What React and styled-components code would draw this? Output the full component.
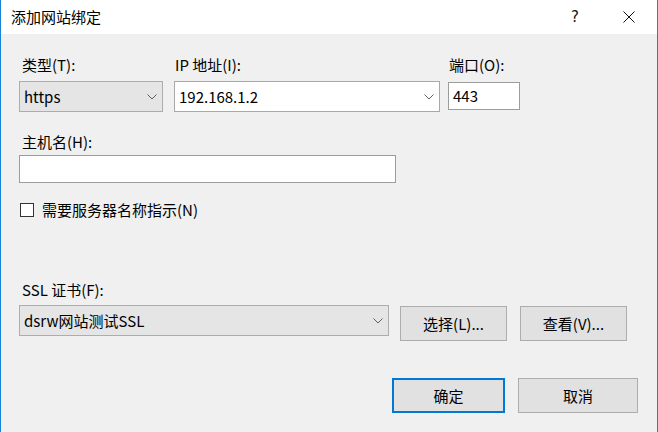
import React from "react";
import styled, { createGlobalStyle } from "styled-components";

const GlobalStyle = createGlobalStyle`
  html, body {
    margin: 0;
    padding: 0;
    background: #f0f0f0;
  }
  * {
    box-sizing: border-box;
  }
`;

const FONT = `"Microsoft YaHei UI", "Noto Sans CJK SC", "Noto Sans", sans-serif`;

const Chevron = () => (
  <svg width="10" height="6" viewBox="0 0 10 6">
    <polyline points="0.5,0.5 5,5 9.5,0.5" fill="none" stroke="#606060" strokeWidth="1" />
  </svg>
);

const CloseIcon = () => (
  <svg width="12" height="12" viewBox="0 0 12 12">
    <path d="M0.5 0.5 L11.5 11.5 M11.5 0.5 L0.5 11.5" stroke="#111" strokeWidth="1" />
  </svg>
);

const App = () => (
  <React.Fragment>
    <GlobalStyle />
    <Window>
      <TitleBar>
        <Title>添加网站绑定</Title>
        <TitleControls>
          <TitleButton>?</TitleButton>
          <TitleButton $close>
            <CloseIcon />
          </TitleButton>
        </TitleControls>
      </TitleBar>

      <Body>
        <Row>
          <Field $width={144} $gap={11}>
            <Label $indent={3}>类型(T):</Label>
            <Combo>
              <span>https</span>
              <Chevron />
            </Combo>
          </Field>
          <Field $width={266} $gap={8}>
            <Label $indent={1}>IP 地址(I):</Label>
            <Combo $white>
              <span>192.168.1.2</span>
              <Chevron />
            </Combo>
          </Field>
          <Field $width={72}>
            <Label $indent={1}>端口(O):</Label>
            <TextBox $top={1}>443</TextBox>
          </Field>
        </Row>

        <Section $top={20}>
          <Label $indent={3} $bottom={3}>主机名(H):</Label>
          <TextBox $width={377} />
        </Section>

        <CheckRow>
          <CheckBox />
          <span>需要服务器名称指示(N)</span>
        </CheckRow>

        <Section $top={60}>
          <Label $indent={3} $bottom={5}>SSL 证书(F):</Label>
          <Row>
            <Field $width={370} $gap={11}>
              <Combo>
                <span>dsrw网站测试SSL</span>
                <Chevron />
              </Combo>
            </Field>
            <Button $width={107} $top={1}>选择(L)...</Button>
            <Button $width={107} $top={1} $left={13}>查看(V)...</Button>
          </Row>
        </Section>

        <Footer>
          <Button $width={113} $height={35} $primary>确定</Button>
          <Button $width={120} $height={35} $left={13}>取消</Button>
        </Footer>
      </Body>
    </Window>
  </React.Fragment>
);

export default App;

const Window = styled.div`
  width: 658px;
  height: 432px;
  display: flex;
  flex-direction: column;
  border-left: 1px solid #1883d7;
  border-right: 1px solid #1883d7;
  font-family: ${FONT};
  font-size: 15px;
  line-height: 20px;
  color: #000;
  overflow: hidden;
`;

const TitleBar = styled.div`
  height: 34px;
  flex-shrink: 0;
  display: flex;
  align-items: center;
  background: #fff;
  padding-left: 10px;
`;

const Title = styled.div`
  font-size: 15px;
`;

const TitleControls = styled.div`
  margin-left: auto;
  display: flex;
  align-items: center;
  padding-right: 5px;
`;

const TitleButton = styled.div`
  width: 46px;
  height: 34px;
  display: flex;
  align-items: center;
  justify-content: center;
  margin-left: ${props => (props.$close ? "8px" : "0")};
  font-family: "DejaVu Sans", sans-serif;
  font-size: 15px;
  color: #111;
`;

const Body = styled.div`
  flex: 1;
  background: #f0f0f0;
  padding: 21px 0 0 18px;
  display: flex;
  flex-direction: column;
`;

const Row = styled.div`
  display: flex;
  align-items: flex-start;
`;

const Section = styled.div`
  margin-top: ${props => props.$top}px;
  display: flex;
  flex-direction: column;
`;

const Field = styled.div`
  width: ${props => props.$width}px;
  margin-right: ${props => props.$gap || 0}px;
  display: flex;
  flex-direction: column;
`;

const Label = styled.div`
  height: 20px;
  padding-left: ${props => props.$indent || 0}px;
  margin-bottom: ${props => (props.$bottom !== undefined ? props.$bottom : 6)}px;
  white-space: nowrap;
`;

const Combo = styled.div`
  height: 31px;
  display: flex;
  align-items: center;
  justify-content: space-between;
  padding: 0 5px 0 4px;
  border: 1px solid ${props => (props.$white ? "#a8a8a8" : "#adadad")};
  background: ${props => (props.$white ? "#fff" : "#e5e5e5")};
  white-space: nowrap;
`;

const TextBox = styled.div`
  width: ${props => (props.$width ? `${props.$width}px` : "auto")};
  height: 28px;
  margin-top: ${props => props.$top || 0}px;
  display: flex;
  align-items: center;
  padding-left: 4px;
  border: 1px solid #9c9c9c;
  background: #fff;
`;

const CheckRow = styled.div`
  margin-top: 17px;
  height: 20px;
  display: flex;
  align-items: center;
  gap: 8px;
  padding-left: 1px;
`;

const CheckBox = styled.div`
  width: 14px;
  height: 14px;
  border: 1px solid #333;
  background: #fff;
`;

const Button = styled.div`
  width: ${props => props.$width}px;
  height: ${props => props.$height || 35}px;
  margin-top: ${props => props.$top || 0}px;
  margin-left: ${props => props.$left || 0}px;
  display: flex;
  align-items: center;
  justify-content: center;
  background: #e1e1e1;
  border: ${props => (props.$primary ? "2px solid #0078d7" : "1px solid #adadad")};
  white-space: nowrap;
`;

const Footer = styled.div`
  margin-top: 37px;
  display: flex;
  justify-content: flex-end;
  padding-right: 19px;
`;
